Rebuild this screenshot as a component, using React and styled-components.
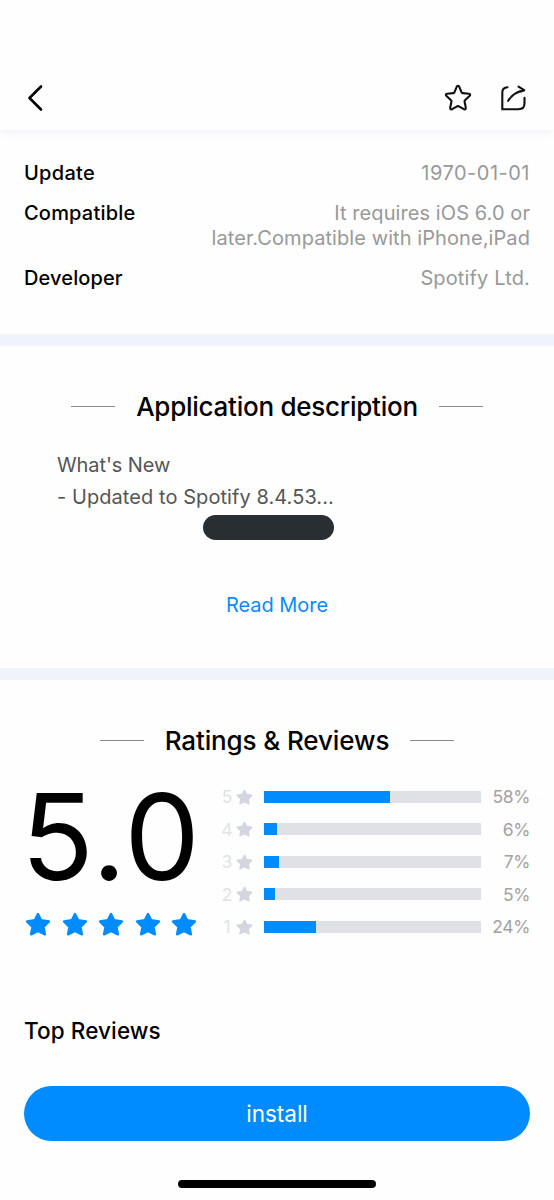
import styled, { createGlobalStyle } from "styled-components";

const GlobalStyle = createGlobalStyle`
  * {
    box-sizing: border-box;
    margin: 0;
    padding: 0;
  }

  body {
    background-color: #fefefe;
    color: #000;
    font-family: "Inter", "Liberation Sans", sans-serif;
  }
`;

const Page = styled.div`
  width: 554px;
  height: 1200px;
  overflow: hidden;
  display: flex;
  flex-direction: column;
`;

const Header = styled.header`
  height: 130px;
  padding: 66px 26px 0 26px;
  display: flex;
  align-items: center;
  justify-content: space-between;
  box-shadow: 0 1px 10px rgba(120, 140, 240, 0.13);
`;

const Actions = styled.div`
  display: flex;
  gap: 25px;
`;

const IconButton = styled.button`
  border: none;
  background: none;
  display: flex;
`;

const Text = styled.span`
  letter-spacing: ${(props) => props.$spacing || 0}px;
  white-space: pre-line;
`;

const InfoList = styled.dl`
  height: 204px;
  padding: 31px 24px 0;
  font-size: 20px;
  line-height: 25px;
`;

const InfoRow = styled.div`
  display: flex;
  justify-content: space-between;
  margin-bottom: 15px;
`;

const Label = styled.dt`
  font-weight: 500;
`;

const Value = styled.dd`
  color: #999;
  text-align: right;
`;

const Divider = styled.div`
  height: 12px;
  flex-shrink: 0;
  background-color: #f1f3fc;
`;

const Section = styled.section`
  height: ${(props) => props.$height}px;
  padding: ${(props) => props.$top}px 24px 0;
`;

const Title = styled.h2`
  display: flex;
  align-items: center;
  justify-content: center;
  gap: 21px;
  font-size: 26px;
  font-weight: 500;
  line-height: 32px;

  &::before,
  &::after {
    content: "";
    width: 44px;
    height: 1px;
    margin-bottom: 1px;
    background-color: #8c8c8c;
  }
`;

const Description = styled.div`
  padding: 26px 33px 0;
  color: #555;
  font-size: 20px;
  line-height: 32px;
`;

const Pill = styled.div`
  width: 131px;
  height: 25px;
  margin: 2px 0 0 179px;
  border-radius: 13px;
  background-color: #292e33;
`;

const ReadMore = styled.button`
  display: block;
  margin: 53px auto 0;
  border: none;
  background: none;
  color: #0b8aff;
  font: inherit;
  font-size: 20px;
  line-height: 24px;
`;

const Ratings = styled.div`
  display: flex;
  margin-top: 23.5px;
`;

const Score = styled.div`
  width: 197px;
`;

const ScoreValue = styled.div`
  height: 120px;
  margin-left: -3px;
  font-size: 120px;
  line-height: 112px;
`;

const ScoreStars = styled.div`
  display: flex;
  gap: 10.5px;
  margin-top: 11.5px;
  padding-left: 1.3px;
`;

const Bars = styled.div`
  flex: 1;
`;

const BarRow = styled.div`
  height: 32.5px;
  display: flex;
  align-items: center;
  color: #a3a3a3;
  font-size: 17.5px;
`;

const Rank = styled.span`
  width: 12px;
  margin-right: 3px;
  color: #e1e3e8;
  text-align: center;
`;

const Track = styled.div`
  width: 217px;
  height: 12px;
  margin-left: 11px;
  background-color: #dfe1e7;
`;

const Fill = styled.div`
  height: 100%;
  background-color: #008cff;
`;

const Percent = styled.span`
  flex: 1;
  text-align: right;
`;

const TopReviews = styled.h3`
  margin-top: 74px;
  font-size: 22.5px;
  font-weight: 500;
  line-height: 28px;
`;

const Install = styled.button`
  width: 506px;
  height: 55px;
  margin: 0 auto;
  border: none;
  border-radius: 28px;
  background-color: #008cff;
  color: #fff;
  font: inherit;
  font-size: 22.5px;
  flex-shrink: 0;
`;

const HomeIndicator = styled.div`
  width: 198px;
  height: 8px;
  margin: 39px auto 0;
  border-radius: 4px;
  background-color: #000;
  flex-shrink: 0;
`;

const info = [
  { label: "Update", labelSpacing: 0.3, value: "1970-01-01", spacing: 0.5 },
  {
    label: "Compatible",
    labelSpacing: 0.2,
    value: "It requires iOS 6.0 or\nlater.Compatible with iPhone,iPad",
    spacing: 0.08,
  },
  {
    label: "Developer",
    labelSpacing: 0.12,
    value: "Spotify Ltd.",
    spacing: 0.14,
  },
];

const ratings = [
  { rank: 5, percent: 58 },
  { rank: 4, percent: 6 },
  { rank: 3, percent: 7 },
  { rank: 2, percent: 5 },
  { rank: 1, percent: 24 },
];

const Star = ({ width, height, color }) => (
  <svg width={width} height={height} viewBox="0 0 26 24">
    <path
      d="M13 2 L16.2 8.3 L24 9.5 L18.5 14.9 L19.9 22.3 L13 19 L6.1 22.3 L7.5 14.9 L2 9.5 L9.8 8.3 Z"
      fill={color}
      stroke={color}
      strokeWidth="2.4"
      strokeLinejoin="round"
    />
  </svg>
);

const App = () => {
  return (
    <>
      <GlobalStyle />
      <Page>
        <Header>
          <IconButton aria-label="Back">
            <svg width="18" height="28" viewBox="0 0 18 28" fill="none">
              <path
                d="M15 2.5 L3.5 14 L15 25.5"
                stroke="#000"
                strokeWidth="2.6"
                strokeLinecap="round"
                strokeLinejoin="round"
              />
            </svg>
          </IconButton>
          <Actions>
            <IconButton aria-label="Favorite">
              <svg width="30" height="30" viewBox="0 0 30 30" fill="none">
                <path
                  d="M13.8 3.7 Q15 1.9 16.2 3.7 L18.6 9.3 Q18.9 10 19.7 10.1 L25.9 10.8 Q28.1 11.3 26.5 13 L22 17.3 Q21.4 17.9 21.6 18.7 L22.8 24.8 Q22.9 27 20.9 26.2 L15.8 23.3 Q15 22.9 14.2 23.3 L9.1 26.2 Q7.1 27 7.2 24.8 L8.4 18.7 Q8.6 17.9 8 17.3 L3.5 13 Q1.9 11.3 4.1 10.8 L10.3 10.1 Q11.1 10 11.4 9.3 Z"
                  stroke="#111"
                  strokeWidth="2.1"
                  strokeLinejoin="round"
                />
              </svg>
            </IconButton>
            <IconButton aria-label="Share">
              <svg width="30" height="30" viewBox="0 0 30 30" fill="none">
                <path
                  d="M9.5 4.3 Q4.3 4.7 4.3 9.5 V26.2 H20.5 Q26.5 26.2 26.5 20.5 V14.8"
                  stroke="#111"
                  strokeWidth="2.1"
                  strokeLinecap="round"
                />
                <path
                  d="M10.2 17.8 Q15.5 9 26 7.4 M20.5 3.7 L26.2 7.2 L22.8 8.6"
                  stroke="#111"
                  strokeWidth="2.1"
                  strokeLinecap="round"
                  strokeLinejoin="round"
                />
              </svg>
            </IconButton>
          </Actions>
        </Header>

        <InfoList>
          {info.map((item) => (
            <InfoRow key={item.label}>
              <Label>
                <Text $spacing={item.labelSpacing}>{item.label}</Text>
              </Label>
              <Value>
                <Text $spacing={item.spacing}>{item.value}</Text>
              </Value>
            </InfoRow>
          ))}
        </InfoList>

        <Divider />

        <Section $height={322} $top={45}>
          <Title>
            <Text $spacing={-0.25}>Application description</Text>
          </Title>
          <Description>
            <p>
              <Text $spacing={-0.1}>What's New</Text>
            </p>
            <p>
              <Text $spacing={0.07}>- Updated to Spotify 8.4.53...</Text>
            </p>
          </Description>
          <Pill />
          <ReadMore>
            <Text $spacing={-0.05}>Read More</Text>
          </ReadMore>
        </Section>

        <Divider />

        <Section $height={406} $top={45}>
          <Title>
            <Text $spacing={-0.12}>Ratings & Reviews</Text>
          </Title>
          <Ratings>
            <Score>
              <ScoreValue>
                <Text $spacing={1}>5.0</Text>
              </ScoreValue>
              <ScoreStars>
                {[1, 2, 3, 4, 5].map((star) => (
                  <Star key={star} width={26} height={24} color="#008cff" />
                ))}
              </ScoreStars>
            </Score>
            <Bars>
              {ratings.map((row) => (
                <BarRow key={row.rank}>
                  <Rank>{row.rank}</Rank>
                  <Star width={17} height={16} color="#d3d6df" />
                  <Track>
                    <Fill style={{ width: `${row.percent}%` }} />
                  </Track>
                  <Percent>
                    <Text $spacing={-0.4}>{row.percent}%</Text>
                  </Percent>
                </BarRow>
              ))}
            </Bars>
          </Ratings>
          <TopReviews>
            <Text $spacing={0.1}>Top Reviews</Text>
          </TopReviews>
        </Section>

        <Install>
          <Text>install</Text>
        </Install>
        <HomeIndicator />
      </Page>
    </>
  );
};

export default App;
